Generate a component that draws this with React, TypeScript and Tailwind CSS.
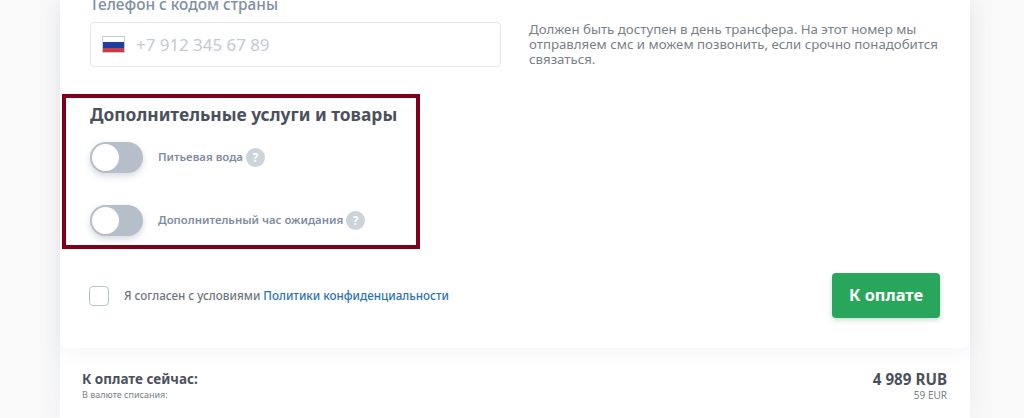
import React from "react";

function Toggle({ label, mt }: { label: string; mt: string }) {
  return (
    <div className={`flex items-center ${mt}`}>
      <div className="w-[53px] h-[31px] rounded-full bg-[#b5bec9] shadow-[0_3px_6px_rgba(90,105,125,0.25)] flex items-center pl-[2px]">
        <div className="w-[27px] h-[27px] rounded-full bg-white" />
      </div>
      <span className="ml-[15px] -mt-[1px] text-[11.4px] leading-[16px] font-semibold text-[#7f8c9f]">{label}</span>
      <span className="ml-[3px] w-[19px] h-[19px] rounded-full bg-[#ccd3da] text-white text-[12px] leading-[19px] font-bold text-center">?</span>
    </div>
  );
}

export default function App() {
  return (
    <div className="w-[1024px] h-[418px] overflow-hidden bg-[#f9f9fa] font-['Noto_Sans','Open_Sans',sans-serif]">
      <div className="ml-[60px] w-[910px] h-[418px] bg-white shadow-[0_0_24px_rgba(60,70,90,0.07)]">
        <div className="h-[348px] rounded-b-[8px] bg-white shadow-[0_4px_20px_rgba(60,70,90,0.06)] pl-[2px] relative">
          <div className="pl-[28px] flex">
            <div className="w-[411px]">
              <div className="text-[15.4px] leading-[20px] font-medium text-[#8090a3] -mt-[5px] h-[20px]">Телефон с кодом страны</div>
              <div className="mt-[7px] h-[45px] rounded-[4px] border border-[#e4e8ee] flex items-center pl-[11px]">
                <svg width="23" height="17" viewBox="0 0 23 17" className="shrink-0">
                  <rect x="0.5" y="0.5" width="22" height="16" fill="#fff" stroke="#c5ccd6" />
                  <rect x="1" y="6" width="21" height="6" fill="#1f3f9e" />
                  <rect x="1" y="12" width="21" height="4" fill="#cf3a40" />
                </svg>
                <span className="ml-[11px] text-[16.9px] text-[#c3cad3]">+7 912 345 67 89</span>
              </div>
            </div>
            <div className="ml-[28px] mt-[22px] w-[420px] text-[13.25px] leading-[15px] text-[#7a7f87]">
              Должен быть доступен в день трансфера. На этот номер мы отправляем смс и можем позвонить, если срочно понадобится связаться.
            </div>
          </div>
          <div className="mt-[27px] w-[358px] h-[155px] border-[4px] border-[#80001c] pl-[24px]">
            <div className="mt-[4px] text-[17.4px] leading-[24px] font-bold text-[#4a515b]">Дополнительные услуги и товары</div>
            <Toggle label="Питьевая вода" mt="mt-[16px]" />
            <Toggle label="Дополнительный час ожидания" mt="mt-[32px]" />
          </div>
          <div className="pl-[27px] pr-[30px] mt-[24px] flex items-center">
            <div className="w-[20px] h-[20px] rounded-[4px] border border-[#b9c4d2] bg-white" />
            <span className="ml-[15px] mt-[1px] text-[11.65px] font-medium text-[#6f757d]">
              Я согласен с условиями <span className="font-medium text-[#2a72b5]">Политики конфиденциальности</span>
            </span>
            <button className="ml-auto w-[108px] h-[45px] rounded-[4px] bg-[#28a65c] text-white text-[16.4px] font-bold shadow-[0_2px_5px_rgba(40,120,80,0.25)]">К оплате</button>
          </div>
        </div>
        <div className="pl-[22px] pr-[23px] pt-[22px] flex justify-between">
          <div>
            <div className="text-[13.5px] leading-[18px] font-bold text-[#4a515b]">К оплате сейчас:</div>
            <div className="text-[9px] leading-[14px] text-[#7a7f87]">В валюте списания:</div>
          </div>
          <div className="text-right">
            <div className="text-[15.2px] leading-[18px] font-bold text-[#4a515b]">4 989 RUB</div>
            <div className="text-[10px] leading-[14px] text-[#7a7f87]">59 EUR</div>
          </div>
        </div>
      </div>
    </div>
  );
}
